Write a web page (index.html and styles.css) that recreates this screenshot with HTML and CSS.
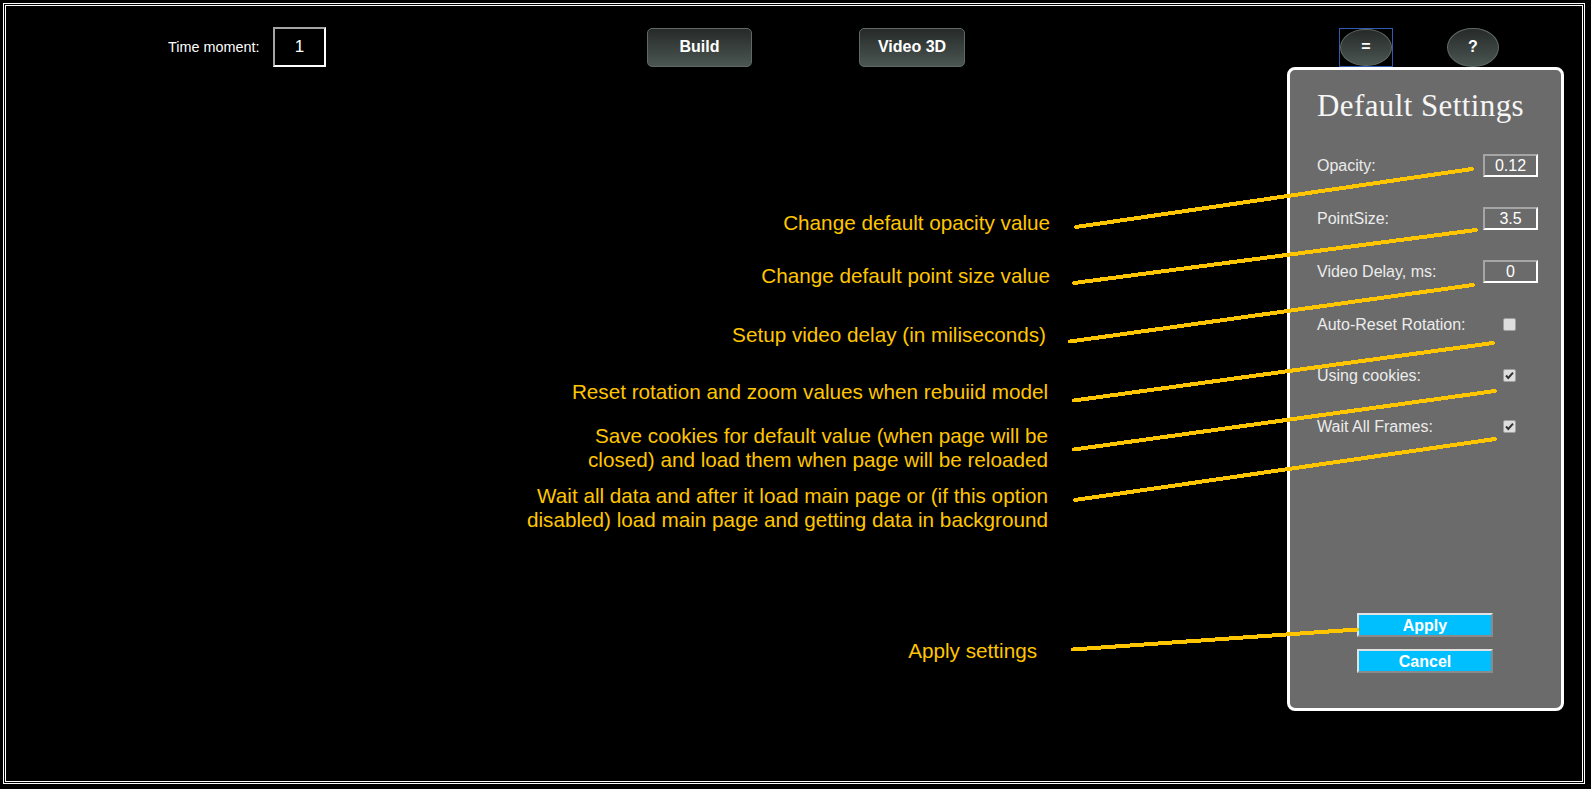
FILE: index.html
```html
<!DOCTYPE html>
<html>
<head>
<meta charset="utf-8">
<title>Default Settings</title>
<link rel="stylesheet" href="styles.css">
</head>
<body>
<div class="frame">
  <div class="topbar">
    <span class="tm-label">Time moment:</span>
    <span class="tm-input">1</span>
    <button class="btn btn-build">Build</button>
    <button class="btn btn-video">Video 3D</button>
    <span class="focus-ring"><button class="btn round">=</button></span>
    <button class="btn round help">?</button>
  </div>
  <div class="notes">
    <div class="note n1">Change default opacity value</div>
    <div class="note n2">Change default point size value</div>
    <div class="note n3">Setup video delay (in miliseconds)</div>
    <div class="note n4">Reset rotation and zoom values when rebuiid model</div>
    <div class="note n5">Save cookies for default value (when page will be<br>closed) and load them when page will be reloaded</div>
    <div class="note n6">Wait all data and after it load main page or (if this option<br>disabled) load main page and getting data in background</div>
    <div class="note n7">Apply settings</div>
  </div>
</div>

<div class="panel">
  <h1 class="panel-title">Default Settings</h1>
  <div class="row r1"><span class="lbl">Opacity:</span><span class="val">0.12</span></div>
  <div class="row r2"><span class="lbl">PointSize:</span><span class="val">3.5</span></div>
  <div class="row r3"><span class="lbl">Video Delay, ms:</span><span class="val">0</span></div>
  <div class="row r4"><span class="lbl">Auto-Reset Rotation:</span><span class="chk"></span></div>
  <div class="row r5"><span class="lbl">Using cookies:</span><span class="chk on"><svg viewBox="0 0 13 13" width="13" height="13"><path d="M3 6.5 L5.3 9 L10 3.6" fill="none" stroke="#333" stroke-width="2"/></svg></span></div>
  <div class="row r6"><span class="lbl">Wait All Frames:</span><span class="chk on"><svg viewBox="0 0 13 13" width="13" height="13"><path d="M3 6.5 L5.3 9 L10 3.6" fill="none" stroke="#333" stroke-width="2"/></svg></span></div>
  <div class="actions">
    <button class="act">Apply</button>
    <button class="act">Cancel</button>
  </div>
</div>

<svg class="leaders" width="1591" height="789" viewBox="0 0 1591 789">
  <g stroke="#ffc600" stroke-width="4" stroke-linecap="round" fill="none">
    <line x1="1076" y1="227" x2="1472" y2="169"/>
    <line x1="1074" y1="283" x2="1476" y2="230"/>
    <line x1="1070" y1="341.5" x2="1473" y2="285"/>
    <line x1="1074" y1="400.5" x2="1493" y2="343"/>
    <line x1="1074" y1="449.5" x2="1495" y2="391"/>
    <line x1="1075" y1="500" x2="1495" y2="439"/>
    <line x1="1073" y1="649.5" x2="1357" y2="629.5"/>
  </g>
</svg>
</body>
</html>
```

FILE: styles.css
```css
html, body {
  margin: 0;
  padding: 0;
  background: #000;
  width: 1591px;
  height: 789px;
  overflow: hidden;
  font-family: "Liberation Sans", Arial, sans-serif;
}

body {
  position: relative;
}

.frame {
  margin: 3px 0 0 3px;
  width: 1582px;
  height: 781px;
  box-sizing: border-box;
  border: 3px double #fff;
}

/* top bar */
.topbar {
  display: flex;
  align-items: center;
  padding-top: 21px;
  height: 40px;
}

.tm-label {
  margin-left: 162px;
  width: 92px;
  color: #fff;
  font-size: 14.4px;
  white-space: nowrap;
}

.tm-input {
  margin-left: 13px;
  width: 53px;
  height: 40px;
  box-sizing: border-box;
  border: 2px solid;
  border-color: #a5a5a5 #fff #fff #a5a5a5;
  color: #fff;
  font-size: 17px;
  line-height: 36px;
  text-align: center;
}

.btn {
  box-sizing: border-box;
  height: 39px;
  padding: 0;
  border: 1px solid #5f6a66;
  border-radius: 5px;
  background: linear-gradient(#262a29, #4b5652);
  color: #fff;
  font-family: "Liberation Sans", Arial, sans-serif;
  font-size: 16px;
  font-weight: bold;
  text-align: center;
}

.btn-build {
  margin-left: 321px;
  width: 105px;
}

.btn-video {
  margin-left: 107px;
  width: 106px;
}

.focus-ring {
  margin-left: 374px;
  width: 54px;
  height: 39px;
  box-sizing: border-box;
  border: 1px solid #2f5cae;
  display: flex;
}

.round {
  width: 52px;
  height: 37px;
  border-radius: 26px / 19px;
}

.help {
  margin-left: 54px;
  width: 52px;
  height: 39px;
  border-radius: 26px / 20px;
}

/* annotations */
.notes {
  width: 1044px;
  display: flex;
  flex-direction: column;
  align-items: flex-end;
}

.note {
  color: #ffc600;
  font-size: 20.7px;
  line-height: 24px;
  text-align: right;
  white-space: nowrap;
}

.n1 { margin-top: 144px; }
.n2 { margin-top: 29px; }
.n3 { margin-top: 35px; padding-right: 4px; }
.n4 { margin-top: 33px; padding-right: 2px; }
.n5 { margin-top: 20px; padding-right: 2px; }
.n6 { margin-top: 12px; padding-right: 2px; }
.n7 { margin-top: 107px; padding-right: 13px; }

/* settings panel (popup over the page) */
.panel {
  position: absolute;
  left: 1287px;
  top: 67px;
  width: 277px;
  height: 644px;
  box-sizing: border-box;
  border: 3px solid #fff;
  border-radius: 8px;
  background: #6b6b6b;
  padding: 18px 23px 35px 27px;
  display: flex;
  flex-direction: column;
}

.panel-title {
  margin: 0;
  font-family: "Liberation Serif", "Times New Roman", serif;
  font-weight: normal;
  font-size: 31px;
  letter-spacing: 0.4px;
  line-height: 36px;
  color: #f6f6f6;
  white-space: nowrap;
}

.row {
  display: flex;
  justify-content: space-between;
  align-items: center;
  height: 23px;
  margin-top: 30px;
}

.r5, .r6 { margin-top: 28px; }

.lbl {
  color: #ececec;
  font-size: 16px;
  white-space: nowrap;
}

.val {
  width: 55px;
  height: 23px;
  box-sizing: border-box;
  border: 2px solid;
  border-color: #a5a5a5 #fff #fff #a5a5a5;
  color: #fff;
  font-size: 16px;
  line-height: 19px;
  text-align: center;
}

.chk {
  width: 13px;
  height: 13px;
  box-sizing: border-box;
  margin-right: 22px;
  background: #dedede;
  border: 1px solid #a0a0a0;
  border-radius: 2px;
  display: flex;
  align-items: center;
  justify-content: center;
}

.chk svg {
  display: block;
  flex: none;
}

.actions {
  margin-top: auto;
  margin-left: 40px;
  display: flex;
  flex-direction: column;
  gap: 12px;
}

.act {
  width: 136px;
  height: 24px;
  box-sizing: border-box;
  padding: 0;
  border: 2px solid;
  border-color: #e2e2e2 #8a8a8a #8a8a8a #e2e2e2;
  background: #00bfff;
  color: #fff;
  font-family: "Liberation Sans", Arial, sans-serif;
  font-size: 16px;
  font-weight: bold;
  line-height: 19px;
  text-align: center;
}

/* leader lines drawn over the whole screenshot */
.leaders {
  position: absolute;
  left: 0;
  top: 0;
  pointer-events: none;
  shape-rendering: crispEdges;
}
```
